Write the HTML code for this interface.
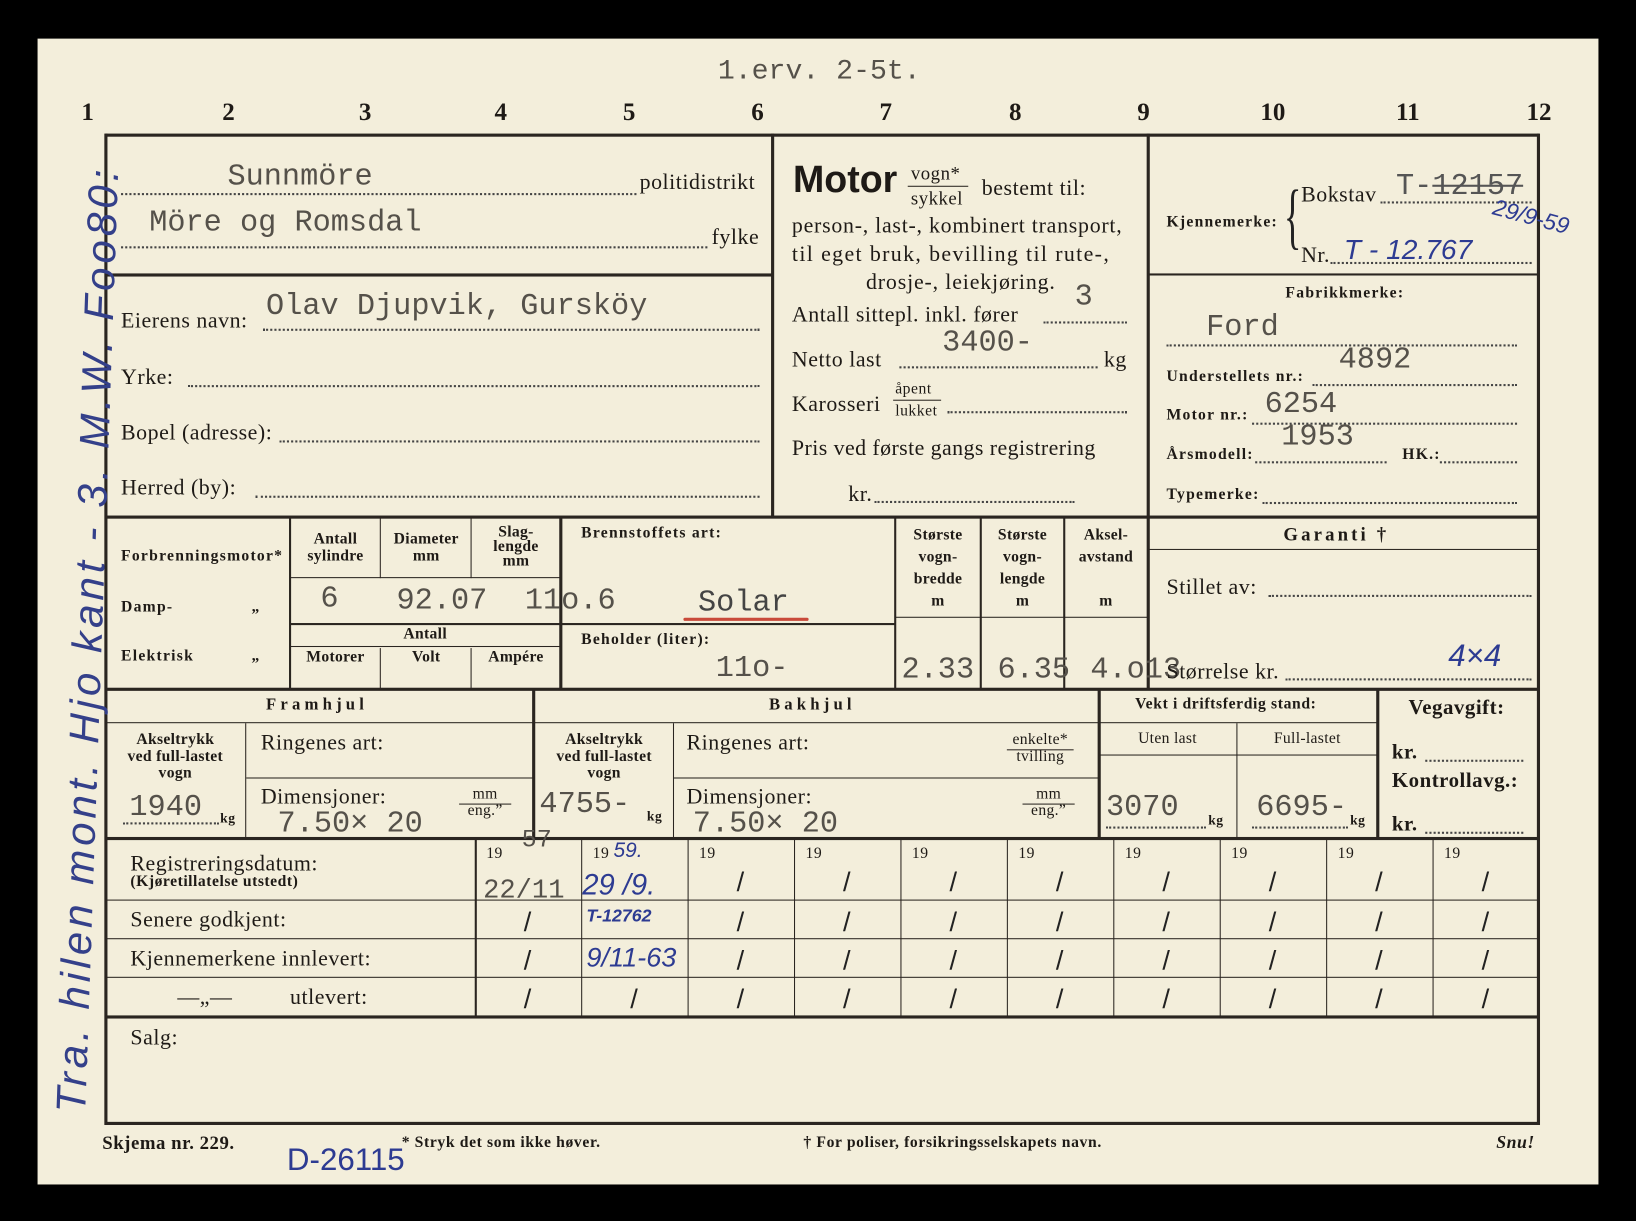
<!DOCTYPE html>
<html><head><meta charset="utf-8"><style>
html,body{margin:0;padding:0;background:#000;width:1636px;height:1221px;overflow:hidden}
#s{position:absolute;left:0;top:0;width:1568px;height:1170px;transform:scale(1.04337,1.04359);transform-origin:0 0;background:#000}
.card{position:absolute;left:36px;top:37px;width:1496px;height:1098px;background:#f3eedb}
.h,.v{position:absolute;background:#2a2520}
.t{position:absolute;font-family:"Liberation Serif",serif;color:#1e1a16;white-space:nowrap;font-size:21px;letter-spacing:0.5px}
.b{font-weight:bold}
.sm{font-size:15px;font-weight:bold;text-align:center;line-height:16px;letter-spacing:0.3px}
.lb{font-size:15px;font-weight:bold;letter-spacing:1.2px}
.ty{position:absolute;font-family:"Liberation Mono",monospace;color:#55514a;white-space:nowrap;font-size:29px}
.hw{position:absolute;font-family:"Liberation Sans",sans-serif;color:#2d3b92;white-space:nowrap;font-style:italic}
.dot{position:absolute;border-bottom:2px dotted #444;height:0}
.num{position:absolute;font-family:"Liberation Serif",serif;font-weight:bold;font-size:24px;color:#1e1a16}
</style></head><body><div id="s"><div class="card">
</div>
<div class="num" style="left:78px;top:95px">1</div><div class="num" style="left:213px;top:95px">2</div><div class="num" style="left:344px;top:95px">3</div><div class="num" style="left:474px;top:95px">4</div><div class="num" style="left:597px;top:95px">5</div><div class="num" style="left:720px;top:95px">6</div><div class="num" style="left:843px;top:95px">7</div><div class="num" style="left:967px;top:95px">8</div><div class="num" style="left:1090px;top:95px">9</div><div class="num" style="left:1208px;top:95px">10</div><div class="num" style="left:1338px;top:95px">11</div><div class="num" style="left:1463px;top:95px">12</div>
<div class="ty" style="left:688px;top:54px;font-size:27px">1.erv. 2-5t.</div>

<div class="h" style="left:101px;top:128px;width:1374px;height:3px"></div>
<div class="h" style="left:101px;top:1075px;width:1374px;height:3px"></div>
<div class="v" style="left:100px;top:128px;width:3px;height:950px"></div>
<div class="v" style="left:1473px;top:128px;width:3px;height:950px"></div>
<div class="v" style="left:739px;top:128px;width:3px;height:368px"></div>
<div class="v" style="left:1099px;top:128px;width:3px;height:533px"></div>
<div class="h" style="left:101px;top:262px;width:639px;height:3px"></div>
<div class="h" style="left:1100px;top:262px;width:375px;height:2px"></div>
<div class="h" style="left:101px;top:494px;width:1374px;height:3px"></div>
<div class="h" style="left:101px;top:659px;width:1374px;height:3px"></div>
<div class="h" style="left:101px;top:802px;width:1374px;height:3px"></div>
<div class="h" style="left:101px;top:973px;width:1374px;height:3px"></div>

<div class="ty" style="left:218px;top:153px">Sunnmöre</div>
<div class="dot" style="left:116px;top:185px;width:494px"></div>
<div class="t" style="left:613px;top:162px">politidistrikt</div>
<div class="ty" style="left:143px;top:197px">Möre og Romsdal</div>
<div class="dot" style="left:116px;top:236px;width:562px"></div>
<div class="t" style="left:682px;top:215px">fylke</div>
<div class="t" style="left:116px;top:295px">Eierens navn:</div>
<div class="ty" style="left:255px;top:277px">Olav Djupvik, Gursköy</div>
<div class="dot" style="left:252px;top:315px;width:476px"></div>
<div class="t" style="left:116px;top:349px">Yrke:</div>
<div class="dot" style="left:180px;top:369px;width:548px"></div>
<div class="t" style="left:116px;top:402px">Bopel (adresse):</div>
<div class="dot" style="left:268px;top:422px;width:460px"></div>
<div class="t" style="left:116px;top:455px">Herred (by):</div>
<div class="dot" style="left:245px;top:475px;width:483px"></div>

<div class="t b" style="left:760px;top:151px;font-family:'Liberation Sans',sans-serif;font-size:36px;letter-spacing:0">Motor</div>
<div class="t" style="left:873px;top:156px;font-size:18px">vogn*</div>
<div class="h" style="left:870px;top:178px;width:58px;height:1px"></div>
<div class="t" style="left:873px;top:180px;font-size:18px">sykkel</div>
<div class="t" style="left:941px;top:168px">bestemt til:</div>
<div class="t" style="left:759px;top:204px;letter-spacing:0.7px">person-, last-, kombinert transport,</div>
<div class="t" style="left:759px;top:231px;letter-spacing:1.3px">til eget bruk, bevilling til rute-,</div>
<div class="t" style="left:830px;top:258px;letter-spacing:0.8px">drosje-, leiekjøring.</div>
<div class="t" style="left:759px;top:289px">Antall sittepl. inkl. fører</div>
<div class="ty" style="left:1030px;top:268px">3</div>
<div class="dot" style="left:1000px;top:308px;width:80px"></div>
<div class="t" style="left:759px;top:332px">Netto last</div>
<div class="ty" style="left:903px;top:312px">3400-</div>
<div class="dot" style="left:862px;top:351px;width:190px"></div>
<div class="t" style="left:1058px;top:332px">kg</div>
<div class="t" style="left:759px;top:375px">Karosseri</div>
<div class="t" style="left:858px;top:365px;font-size:15px">åpent</div>
<div class="h" style="left:856px;top:383px;width:46px;height:1px"></div>
<div class="t" style="left:858px;top:386px;font-size:15px">lukket</div>
<div class="dot" style="left:908px;top:394px;width:172px"></div>
<div class="t" style="left:759px;top:417px;letter-spacing:0.4px">Pris ved første gangs registrering</div>
<div class="t" style="left:813px;top:461px">kr.</div>
<div class="dot" style="left:838px;top:480px;width:192px"></div>

<div class="t lb" style="left:1118px;top:205px">Kjennemerke:</div>
<div class="t" style="left:1222px;top:168px;font-size:70px;line-height:80px;transform:scaleX(0.5);color:#222">{</div>
<div class="t" style="left:1247px;top:174px">Bokstav</div>
<div class="ty" style="left:1338px;top:162px;color:#555">T-<s>12157</s></div>
<div class="dot" style="left:1323px;top:193px;width:145px"></div>
<div class="t" style="left:1247px;top:232px">Nr.</div>
<div class="hw" style="left:1288px;top:224px;font-size:27px">T - 12.767</div>
<div class="dot" style="left:1275px;top:251px;width:193px"></div>
<div class="hw" style="left:1430px;top:195px;font-size:22px;transform:rotate(15deg)">29/9-59</div>
<div class="t lb" style="left:1232px;top:273px">Fabrikkmerke:</div>
<div class="ty" style="left:1156px;top:297px">Ford</div>
<div class="dot" style="left:1118px;top:330px;width:336px"></div>
<div class="t lb" style="left:1118px;top:353px">Understellets nr.:</div>
<div class="ty" style="left:1283px;top:328px">4892</div>
<div class="dot" style="left:1258px;top:368px;width:196px"></div>
<div class="t lb" style="left:1118px;top:390px">Motor nr.:</div>
<div class="ty" style="left:1212px;top:371px">6254</div>
<div class="dot" style="left:1200px;top:405px;width:254px"></div>
<div class="t lb" style="left:1118px;top:428px">Årsmodell:</div>
<div class="ty" style="left:1228px;top:402px">1953</div>
<div class="dot" style="left:1203px;top:442px;width:126px"></div>
<div class="t lb" style="left:1344px;top:428px">HK.:</div>
<div class="dot" style="left:1380px;top:442px;width:74px"></div>
<div class="t lb" style="left:1118px;top:466px">Typemerke:</div>
<div class="dot" style="left:1210px;top:481px;width:244px"></div>

<div class="v" style="left:277px;top:496px;width:2px;height:165px"></div>
<div class="v" style="left:364px;top:496px;width:1px;height:58px"></div>
<div class="v" style="left:451px;top:496px;width:1px;height:58px"></div>
<div class="v" style="left:364px;top:621px;width:1px;height:40px"></div>
<div class="v" style="left:451px;top:621px;width:1px;height:40px"></div>
<div class="v" style="left:536px;top:496px;width:3px;height:165px"></div>
<div class="v" style="left:857px;top:496px;width:2px;height:165px"></div>
<div class="v" style="left:939px;top:496px;width:2px;height:165px"></div>
<div class="v" style="left:1019px;top:496px;width:2px;height:165px"></div>
<div class="h" style="left:278px;top:553px;width:259px;height:1px"></div>
<div class="h" style="left:278px;top:597px;width:580px;height:2px"></div>
<div class="h" style="left:278px;top:619px;width:259px;height:1px"></div>
<div class="h" style="left:858px;top:591px;width:242px;height:1px"></div>
<div class="h" style="left:1100px;top:526px;width:375px;height:1px"></div>
<div class="t lb" style="left:116px;top:525px">Forbrenningsmotor*</div>
<div class="t lb" style="left:116px;top:574px">Damp-</div><div class="t lb" style="left:241px;top:574px">„</div>
<div class="t lb" style="left:116px;top:621px">Elektrisk</div><div class="t lb" style="left:241px;top:621px">„</div>
<div class="t sm" style="left:278px;top:509px;width:87px">Antall<br>sylindre</div>
<div class="t sm" style="left:365px;top:509px;width:87px">Diameter<br>mm</div>
<div class="t sm" style="left:452px;top:503px;width:85px;line-height:14px">Slag-<br>lengde<br>mm</div>
<div class="t sm" style="left:278px;top:600px;width:259px">Antall</div>
<div class="t sm" style="left:278px;top:622px;width:87px">Motorer</div>
<div class="t sm" style="left:365px;top:622px;width:87px">Volt</div>
<div class="t sm" style="left:452px;top:622px;width:85px">Ampére</div>
<div class="ty" style="left:307px;top:557px">6</div>
<div class="ty" style="left:380px;top:559px">92.07</div>
<div class="ty" style="left:503px;top:559px">11o.6</div>
<div class="t lb" style="left:557px;top:503px">Brennstoffets art:</div>
<div class="ty" style="left:669px;top:561px;color:#444">Solar</div>
<div class="h" style="left:655px;top:592px;width:120px;height:3px;background:#c94a3a;border-radius:2px"></div>
<div class="t lb" style="left:557px;top:605px">Beholder (liter):</div>
<div class="ty" style="left:686px;top:624px">11o-</div>
<div class="t sm" style="left:858px;top:503px;width:82px;line-height:21px">Største<br>vogn-<br>bredde<br>m</div>
<div class="t sm" style="left:940px;top:503px;width:80px;line-height:21px">Største<br>vogn-<br>lengde<br>m</div>
<div class="t sm" style="left:1020px;top:503px;width:80px;line-height:21px">Aksel-<br>avstand<br><br>m</div>
<div class="ty" style="left:864px;top:625px">2.33</div>
<div class="ty" style="left:956px;top:625px">6.35</div>
<div class="ty" style="left:1045px;top:625px">4.o13</div>
<div class="t b" style="left:1230px;top:502px;font-size:18px;letter-spacing:3px">Garanti †</div>
<div class="t" style="left:1118px;top:550px">Stillet av:</div>
<div class="dot" style="left:1216px;top:570px;width:252px"></div>
<div class="t" style="left:1118px;top:631px">Størrelse kr.</div>
<div class="dot" style="left:1232px;top:650px;width:236px"></div>
<div class="hw" style="left:1388px;top:612px;font-size:30px">4×4</div>

<div class="v" style="left:235px;top:693px;width:1px;height:110px"></div>
<div class="v" style="left:510px;top:661px;width:3px;height:142px"></div>
<div class="v" style="left:645px;top:693px;width:1px;height:110px"></div>
<div class="v" style="left:1052px;top:661px;width:3px;height:142px"></div>
<div class="v" style="left:1185px;top:693px;width:1px;height:110px"></div>
<div class="v" style="left:1319px;top:661px;width:3px;height:142px"></div>
<div class="h" style="left:101px;top:692px;width:1219px;height:1px"></div>
<div class="h" style="left:236px;top:745px;width:275px;height:1px"></div>
<div class="h" style="left:646px;top:745px;width:407px;height:1px"></div>
<div class="h" style="left:1053px;top:723px;width:267px;height:1px"></div>
<div class="t b" style="left:255px;top:667px;font-size:16px;letter-spacing:4px">Framhjul</div>
<div class="t b" style="left:737px;top:667px;font-size:16px;letter-spacing:4px">Bakhjul</div>
<div class="t lb" style="left:1088px;top:667px;letter-spacing:0.6px">Vekt i driftsferdig stand:</div>
<div class="t sm" style="left:101px;top:701px;width:134px">Akseltrykk<br>ved full-lastet<br>vogn</div>
<div class="t sm" style="left:513px;top:701px;width:132px">Akseltrykk<br>ved full-lastet<br>vogn</div>
<div class="t" style="left:250px;top:699px">Ringenes art:</div>
<div class="t" style="left:250px;top:751px">Dimensjoner:</div>
<div class="t" style="left:658px;top:699px">Ringenes art:</div>
<div class="t" style="left:658px;top:751px">Dimensjoner:</div>
<div class="t sm" style="left:435px;top:753px;width:60px;font-weight:normal">mm<br>eng.”</div>
<div class="h" style="left:440px;top:770px;width:50px;height:1px"></div>
<div class="t sm" style="left:975px;top:753px;width:60px;font-weight:normal">mm<br>eng.”</div>
<div class="h" style="left:980px;top:770px;width:50px;height:1px"></div>
<div class="t sm" style="left:960px;top:701px;width:74px;font-weight:normal">enkelte*<br>tvilling</div>
<div class="h" style="left:965px;top:718px;width:64px;height:1px"></div>
<div class="ty" style="left:124px;top:757px">1940</div><div class="t b" style="left:211px;top:776px;font-size:13px">kg</div>
<div class="dot" style="left:118px;top:788px;width:92px"></div>
<div class="ty" style="left:266px;top:773px">7.50× 20</div>
<div class="ty" style="left:517px;top:754px">4755-</div><div class="t b" style="left:620px;top:774px;font-size:13px">kg</div>
<div class="ty" style="left:664px;top:773px">7.50× 20</div>
<div class="t sm" style="left:1053px;top:700px;width:132px;font-weight:normal">Uten last</div>
<div class="t sm" style="left:1186px;top:700px;width:134px;font-weight:normal">Full-lastet</div>
<div class="ty" style="left:1060px;top:757px">3070</div><div class="t b" style="left:1158px;top:778px;font-size:13px">kg</div>
<div class="dot" style="left:1060px;top:792px;width:96px"></div>
<div class="ty" style="left:1204px;top:757px">6695-</div><div class="t b" style="left:1294px;top:778px;font-size:13px">kg</div>
<div class="dot" style="left:1200px;top:792px;width:92px"></div>
<div class="t b" style="left:1350px;top:667px;font-size:20px">Vegavgift:</div>
<div class="t b" style="left:1334px;top:710px;font-size:20px">kr.</div><div class="dot" style="left:1366px;top:728px;width:94px"></div>
<div class="t b" style="left:1334px;top:737px;font-size:20px">Kontrollavg.:</div>
<div class="t b" style="left:1334px;top:779px;font-size:20px">kr.</div><div class="dot" style="left:1366px;top:797px;width:94px"></div>

<div class="v" style="left:455px;top:804px;width:2px;height:171px"></div>
<div class="v" style="left:557px;top:804px;width:1px;height:171px"></div>
<div class="v" style="left:659px;top:804px;width:1px;height:171px"></div>
<div class="v" style="left:761px;top:804px;width:1px;height:171px"></div>
<div class="v" style="left:863px;top:804px;width:1px;height:171px"></div>
<div class="v" style="left:965px;top:804px;width:1px;height:171px"></div>
<div class="v" style="left:1067px;top:804px;width:1px;height:171px"></div>
<div class="v" style="left:1169px;top:804px;width:1px;height:171px"></div>
<div class="v" style="left:1271px;top:804px;width:1px;height:171px"></div>
<div class="v" style="left:1373px;top:804px;width:1px;height:171px"></div>
<div class="h" style="left:101px;top:862px;width:1374px;height:1px"></div>
<div class="h" style="left:101px;top:899px;width:1374px;height:1px"></div>
<div class="h" style="left:101px;top:936px;width:1374px;height:1px"></div>
<div class="t" style="left:125px;top:815px">Registreringsdatum:</div>
<div class="t lb" style="left:125px;top:837px;letter-spacing:0.5px">(Kjøretillatelse utstedt)</div>
<div class="t" style="left:125px;top:869px">Senere godkjent:</div>
<div class="t" style="left:125px;top:906px">Kjennemerkene innlevert:</div>
<div class="t" style="left:170px;top:943px">—„—</div>
<div class="t" style="left:278px;top:943px">utlevert:</div>
<div class="t" style="left:466px;top:810px;font-size:15px">19</div>
<div class="t" style="left:568px;top:810px;font-size:15px">19</div>
<div class="t" style="left:670px;top:810px;font-size:15px">19</div>
<div class="t" style="left:772px;top:810px;font-size:15px">19</div>
<div class="t" style="left:874px;top:810px;font-size:15px">19</div>
<div class="t" style="left:976px;top:810px;font-size:15px">19</div>
<div class="t" style="left:1078px;top:810px;font-size:15px">19</div>
<div class="t" style="left:1180px;top:810px;font-size:15px">19</div>
<div class="t" style="left:1282px;top:810px;font-size:15px">19</div>
<div class="t" style="left:1384px;top:810px;font-size:15px">19</div>
<div class="ty" style="left:500px;top:792px;font-size:24px">57</div>
<div class="hw" style="left:588px;top:804px;font-size:20px">59.</div>
<div class="ty" style="left:463px;top:838px;font-size:26px">22/11</div>
<div class="hw" style="left:558px;top:832px;font-size:28px">29 /9.</div>
<div class="hw" style="left:562px;top:868px;font-size:17px;font-weight:bold">T-12762</div>
<div class="hw" style="left:562px;top:902px;font-size:26px">9/11-63</div>
<div style="position:absolute;left:0;top:0;font-family:'Liberation Sans',sans-serif;color:#222;font-size:26px">
<span style="position:absolute;left:502px;top:868px">/</span><span style="position:absolute;left:502px;top:905px">/</span><span style="position:absolute;left:502px;top:942px">/</span><span style="position:absolute;left:604px;top:942px">/</span>
<span style="position:absolute;left:706px;top:830px">/</span><span style="position:absolute;left:706px;top:868px">/</span><span style="position:absolute;left:706px;top:905px">/</span><span style="position:absolute;left:706px;top:942px">/</span>
<span style="position:absolute;left:808px;top:830px">/</span><span style="position:absolute;left:808px;top:868px">/</span><span style="position:absolute;left:808px;top:905px">/</span><span style="position:absolute;left:808px;top:942px">/</span>
<span style="position:absolute;left:910px;top:830px">/</span><span style="position:absolute;left:910px;top:868px">/</span><span style="position:absolute;left:910px;top:905px">/</span><span style="position:absolute;left:910px;top:942px">/</span>
<span style="position:absolute;left:1012px;top:830px">/</span><span style="position:absolute;left:1012px;top:868px">/</span><span style="position:absolute;left:1012px;top:905px">/</span><span style="position:absolute;left:1012px;top:942px">/</span>
<span style="position:absolute;left:1114px;top:830px">/</span><span style="position:absolute;left:1114px;top:868px">/</span><span style="position:absolute;left:1114px;top:905px">/</span><span style="position:absolute;left:1114px;top:942px">/</span>
<span style="position:absolute;left:1216px;top:830px">/</span><span style="position:absolute;left:1216px;top:868px">/</span><span style="position:absolute;left:1216px;top:905px">/</span><span style="position:absolute;left:1216px;top:942px">/</span>
<span style="position:absolute;left:1318px;top:830px">/</span><span style="position:absolute;left:1318px;top:868px">/</span><span style="position:absolute;left:1318px;top:905px">/</span><span style="position:absolute;left:1318px;top:942px">/</span>
<span style="position:absolute;left:1420px;top:830px">/</span><span style="position:absolute;left:1420px;top:868px">/</span><span style="position:absolute;left:1420px;top:905px">/</span><span style="position:absolute;left:1420px;top:942px">/</span>
</div>
<div class="t" style="left:125px;top:982px">Salg:</div>

<div class="t b" style="left:98px;top:1085px;font-size:18px">Skjema nr. 229.</div>
<div class="t lb" style="left:385px;top:1087px;letter-spacing:0.6px">* Stryk det som ikke høver.</div>
<div class="t lb" style="left:770px;top:1087px;letter-spacing:0.6px">† For poliser, forsikringsselskapets navn.</div>
<div class="t b" style="left:1434px;top:1085px;font-size:17px;font-style:italic">Snu!</div>
<div class="hw" style="left:275px;top:1095px;font-size:30px;font-style:normal">D-26115</div>
<div class="hw" style="left:-385px;top:590px;width:940px;font-size:40px;text-align:center;color:#34408a;transform:rotate(-88deg);transform-origin:center;letter-spacing:4px">Tra. hilen mont. Hjo kant - 3. M.W. Foo80:</div>
</div></body></html>
